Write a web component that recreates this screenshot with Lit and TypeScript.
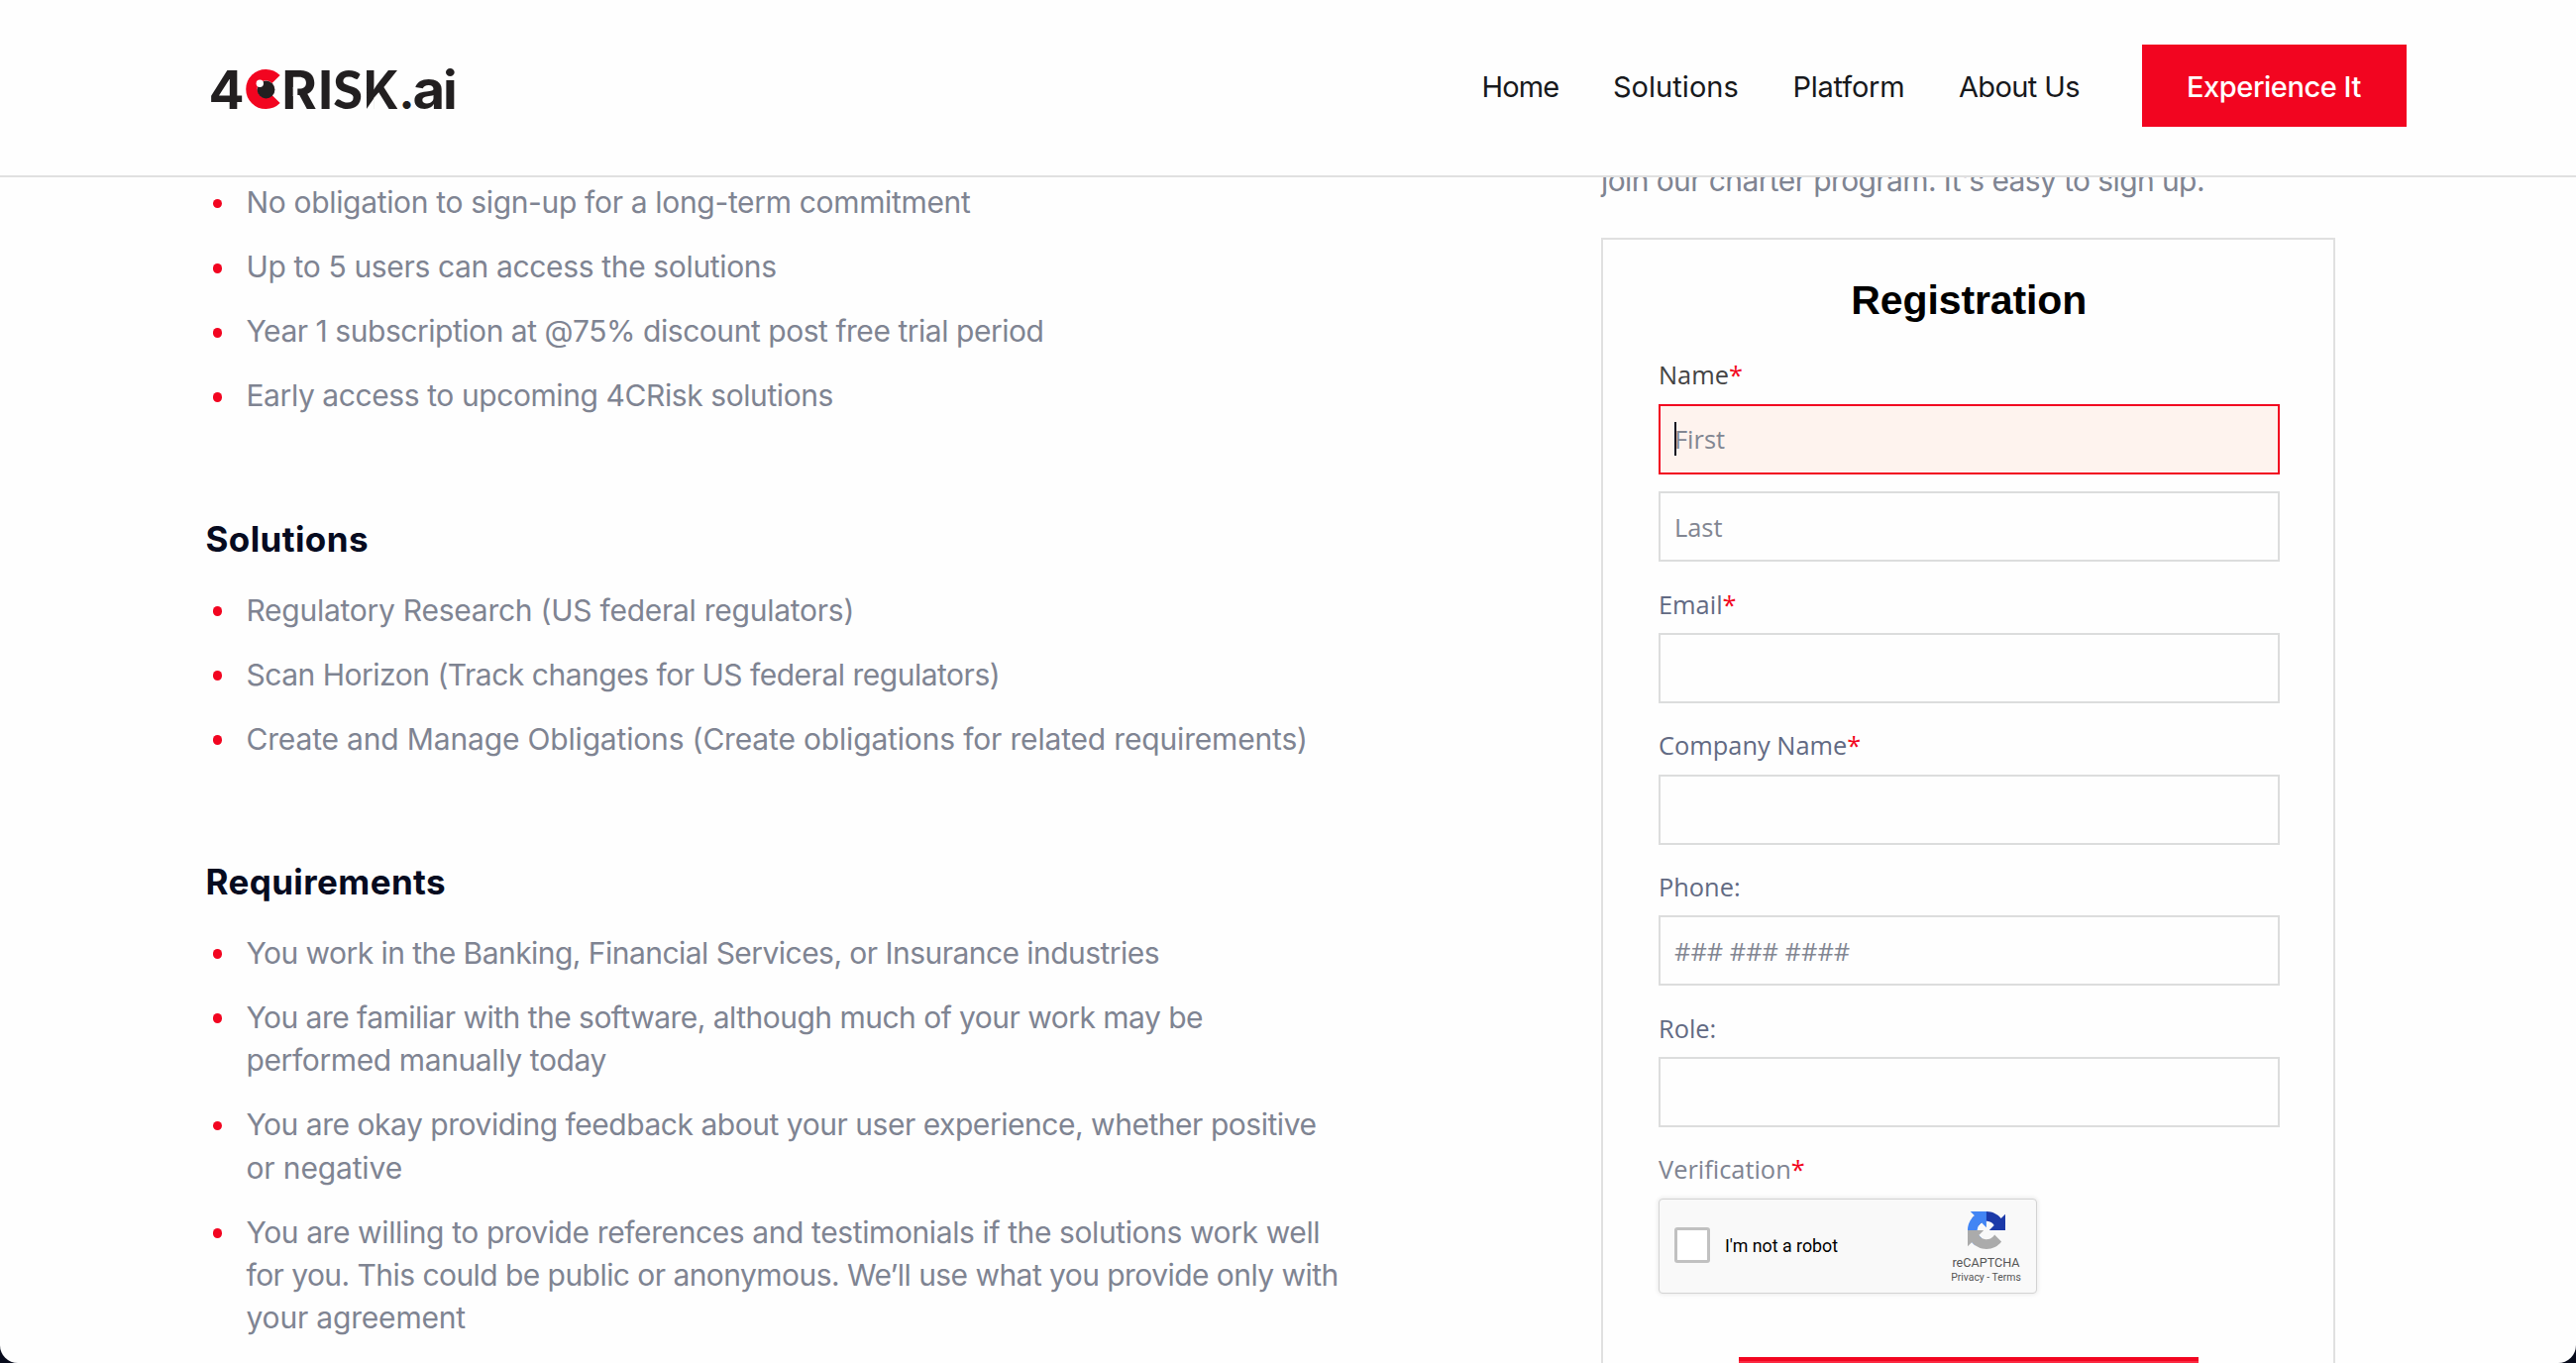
import { LitElement, html, css, svg, nothing } from "lit";
import { customElement, property } from "lit/decorators.js";
import { classMap } from "lit/directives/class-map.js";
import { styleMap } from "lit/directives/style-map.js";

/** A line of text with its tracking in px. */
type Line = [string, number];

const tracked = ([text, tracking]: Line, cls = "line") =>
  html`<span class=${cls} style=${styleMap({ letterSpacing: `${tracking}px` })}>${text}</span>`;

const BENEFITS: Line[][] = [
  [["No obligation to sign-up for a long-term commitment", -0.331]],
  [["Up to 5 users can access the solutions", -0.35]],
  [["Year 1 subscription at @75% discount post free trial period", -0.461]],
  [["Early access to upcoming 4CRisk solutions", -0.413]],
];

const SOLUTIONS: Line[][] = [
  [["Regulatory Research (US federal regulators)", -0.255]],
  [["Scan Horizon (Track changes for US federal regulators)", -0.49]],
  [["Create and Manage Obligations (Create obligations for related requirements)", -0.168]],
];

const REQUIREMENTS: Line[][] = [
  [["You work in the Banking, Financial Services, or Insurance industries", -0.543]],
  [
    ["You are familiar with the software, although much of your work may be", -0.524],
    ["performed manually today", -0.384],
  ],
  [
    ["You are okay providing feedback about your user experience, whether positive", -0.468],
    ["or negative", -0.138],
  ],
  [
    ["You are willing to provide references and testimonials if the solutions work well", -0.395],
    ["for you. This could be public or anonymous. We’ll use what you provide only with", -0.555],
    ["your agreement", -0.184],
  ],
];

const NAV: Line[] = [
  ["Home", -0.81],
  ["Solutions", 0.05],
  ["Platform", -0.2],
  ["About Us", -0.6],
];

@customElement("brand-logo")
class BrandLogo extends LitElement {
  static styles = css`
    :host { display: block; width: 250px; height: 50px; }
    .mark { display: block; overflow: visible; }
    .letter { font-family: Inter, "Liberation Sans", sans-serif; font-weight: 700; font-size: 54.2px; fill: #221f20; }
    .round { font-family: Lato, "Liberation Sans", sans-serif; font-weight: 900; font-size: 54px; }
    .ring { fill: none; stroke: #f20520; stroke-width: 11.4; }
    .pupil { fill: #221f20; }
    .glint { fill: #fff; }
    .notch { fill: #fefefe; }
  `;

  private letter(ch: string, x: number, sx = 1, sy = 1, round = false) {
    return svg`<text class=${classMap({ letter: true, round })}
      transform="translate(${x} 47.9) scale(${sx} ${sy})">${ch}</text>`;
  }

  render() {
    return html`<svg class="mark" width="250" height="50" viewBox="0 0 250 50">
      ${this.letter("4", -0.6, 0.984)}
      <path class="ring" d="M67.6 17.9 A14.4 14.4 0 1 0 67.6 38.1" />
      <circle class="pupil" cx="57.5" cy="28.5" r="8.9" />
      <circle class="glint" cx="51.3" cy="22.3" r="3.7" />
      ${this.letter("R", 73.2)}
      <rect class="notch" x="84.7" y="26" width="4.6" height="9" />
      ${this.letter("I", 110.1)}
      ${this.letter("S", 125.2, 1, 1, true)}
      ${this.letter("K", 155.8, 0.92)}
      <polygon class="notch" points="158.6,48.4 166.9,36.5 166.9,48.4" />
      ${this.letter(".", 191.6, 0.885, 0.885)}
      ${this.letter("a", 205.4, 1.04)}
      ${this.letter("i", 236, 1, 0.97)}
    </svg>`;
  }
}

@customElement("site-header")
class SiteHeader extends LitElement {
  static styles = css`
    :host {
      display: flex; align-items: center; box-sizing: border-box; position: relative; z-index: 1;
      height: 179px; padding: 0 171.5px 4px 211px; border-bottom: 2px solid #e0e0e0;
      background: #fefefe; font-family: Inter, "Liberation Sans", sans-serif; font-size: 29px; color: #17191c;
    }
    .nav { display: flex; align-items: center; margin-left: auto; gap: 54.5px; }
    .link { white-space: nowrap; padding-top: 1px; }
    .cta {
      display: flex; align-items: center; justify-content: center; width: 267px; height: 83px;
      margin-left: 8px; background: #f20520; color: #fff; font-weight: 500;
    }
  `;

  render() {
    return html`
      <brand-logo></brand-logo>
      <nav class="nav">
        ${NAV.map((item) => tracked(item, "link"))}
        <div class="cta">${tracked(["Experience It", -0.45], "link")}</div>
      </nav>
    `;
  }
}

@customElement("bullet-list")
class BulletList extends LitElement {
  @property({ attribute: false }) items: Line[][] = [];

  static styles = css`
    :host { display: flex; flex-direction: column; gap: 21.65px; color: #7f8492; font-size: 30px; line-height: 43.4px; }
    .item { display: flex; gap: 24.4px; padding-left: 7px; }
    .dot { flex: none; width: 9.6px; height: 9.6px; margin-top: 17.6px; border-radius: 50%; background: #f20520; }
    .line { display: block; white-space: nowrap; }
  `;

  render() {
    return this.items.map(
      (lines) => html`<div class="item"><i class="dot"></i><div>${lines.map((l) => tracked(l))}</div></div>`
    );
  }
}

@customElement("form-field")
class FormField extends LitElement {
  @property() label = "";
  @property() tone = "slate";
  @property({ type: Boolean }) required = false;
  @property({ type: Boolean }) active = false;
  @property({ attribute: false }) inputs: string[] = [""];

  static styles = css`
    :host { display: block; font: 25.4px/35px "Open Sans", "Noto Sans", sans-serif; }
    .label { display: block; padding-top: 1px; margin-bottom: 11.6px; color: #626a83; }
    .dark { color: #444; }
    .soft { color: #7f8492; }
    .star { color: #f20520; }
    .stack { display: flex; flex-direction: column; gap: 17.8px; }
    .wrap { position: relative; height: 70.7px; }
    .box {
      box-sizing: border-box; display: block; width: 100%; height: 100%; margin: 0; padding: 0 14px;
      border: 2px solid #dcdddd; border-radius: 0; background: #fefefe; font: inherit; outline: none;
    }
    .box::placeholder { color: #828692; opacity: 1; }
    .focused { border-color: #f20520; background: #fef3ee; }
    .caret { position: absolute; left: 16px; top: 18px; width: 2px; height: 34px; background: #0b1020; }
  `;

  render() {
    const labelClass = { label: true, dark: this.tone === "dark", soft: this.tone === "soft" };
    return html`
      <label class=${classMap(labelClass)}>${this.label}${this.required ? html`<span class="star">*</span>` : nothing}</label>
      <div class="stack">
        ${this.inputs.map((hint, i) => {
          const focused = this.active && i === 0;
          return html`<div class="wrap">
            <input class=${classMap({ box: true, focused })} placeholder=${hint} />
            ${focused ? html`<i class="caret"></i>` : nothing}
          </div>`;
        })}
      </div>
    `;
  }
}

@customElement("robot-check")
class RobotCheck extends LitElement {
  static styles = css`
    :host {
      display: flex; align-items: center; box-sizing: border-box; width: 381.5px; height: 95.7px;
      padding: 0 13px 0 15px; border: 1.5px solid #d3d3d3; border-radius: 4px; background: #f9f9f9;
      box-shadow: 0 0 4px 1px rgba(0, 0, 0, 0.08); font-family: Roboto, sans-serif;
    }
    .check { box-sizing: border-box; width: 36px; height: 36px; margin-bottom: 2px; border: 3px solid #c1c1c1; border-radius: 3px; background: #fff; }
    .text { margin: 0 0 1px 15px; font-size: 17.8px; color: #000; }
    .badge { display: flex; flex-direction: column; align-items: center; width: 74px; margin-left: auto; color: #555; white-space: nowrap; }
    .mark { display: block; width: 38px; height: 38px; margin-top: 3px; }
    .name { margin-top: 5px; font-size: 12.6px; line-height: 17px; }
    .legal { font-size: 10.4px; line-height: 13px; }
    .navy { fill: #1c3aa9; }
    .blue { fill: #4285f4; }
    .grey { fill: #ababab; }
  `;

  render() {
    return html`
      <span class="check"></span>
      <span class="text">I'm not a robot</span>
      <div class="badge">
        <svg class="mark" viewBox="0 0 64 64">
          <path class="navy" d="M64 31.955l-.033-1.37V4.687l-7.16 7.16C50.948 4.674 42.033.093 32.05.093c-10.4 0-19.622 4.96-25.458 12.64l11.736 11.86a15.55 15.55 0 0 1 4.754-5.334c2.05-1.6 4.952-2.906 8.968-2.906.485 0 .86.057 1.135.163 4.976.393 9.288 3.14 11.828 7.124l-8.307 8.307L64 31.953" />
          <path class="blue" d="M31.862.094l-1.37.033H4.594l7.16 7.16C4.58 13.147 0 22.06 0 32.046c0 10.4 4.96 19.622 12.64 25.458L24.5 45.768a15.55 15.55 0 0 1-5.334-4.754c-1.6-2.05-2.906-4.952-2.906-8.968 0-.485.057-.86.163-1.135.393-4.976 3.14-9.288 7.124-11.828l8.307 8.307L31.86.095" />
          <path class="grey" d="M.001 32.045l.033 1.37v25.898l7.16-7.16c5.86 7.173 14.774 11.754 24.76 11.754 10.4 0 19.622-4.96 25.458-12.64l-11.736-11.86a15.55 15.55 0 0 1-4.754 5.334c-2.05 1.6-4.952 2.906-8.968 2.906-.485 0-.86-.057-1.135-.163-4.976-.393-9.288-3.14-11.828-7.124l8.307-8.307c-10.522.04-22.4.066-27.295-.005" />
        </svg>
        <span class="name">reCAPTCHA</span>
        <span class="legal">Privacy - Terms</span>
      </div>
    `;
  }
}

@customElement("registration-card")
class RegistrationCard extends LitElement {
  static styles = css`
    :host {
      display: block; box-sizing: border-box; width: 740.5px; padding: 37px 54px 37px 56px; border: 2px solid #e0e0e0;
      background: #fefefe;
    }
    .title {
      margin: 0 0 33.4px; font: 700 41px/48px "Liberation Sans", Arial, sans-serif; letter-spacing: -0.1px;
      text-align: center; color: #000;
    }
    .fields { display: flex; flex-direction: column; gap: 24.4px; }
    .submit { width: 464px; height: 80px; margin: 64.5px auto 0; box-sizing: border-box; border-top: 4px solid #f20520; background: #fb2a42; }
  `;

  render() {
    return html`
      <h2 class="title">Registration</h2>
      <div class="fields">
        <form-field label="Name" tone="dark" required active .inputs=${["First", "Last"]}></form-field>
        <form-field label="Email" required></form-field>
        <form-field label="Company Name" required></form-field>
        <form-field label="Phone:" .inputs=${["### ### ####"]}></form-field>
        <form-field label="Role:"></form-field>
        <form-field label="Verification" tone="soft" required .inputs=${[]}></form-field>
      </div>
      <robot-check></robot-check>
      <div class="submit"></div>
    `;
  }
}

@customElement("app-root")
class AppRoot extends LitElement {
  static styles = css`
    :host { display: block; height: 1376px; overflow: hidden; background: #070b1c; }
    .page {
      height: 1376px; overflow: hidden; border-radius: 0 0 18px 18px; background: #fefefe;
      font-family: Inter, "Liberation Sans", sans-serif;
    }
    .main { display: grid; grid-template-columns: 1408.5px 741px; padding-left: 207.5px; }
    .copy { padding-top: 4.3px; }
    .heading { margin: 100.9px 0 28.8px; font-size: 35px; line-height: 43px; font-weight: 700; color: #060b1f; letter-spacing: 0.4px; }
    .side { margin-top: -17.8px; }
    .intro { margin: 0 0 35.4px; font-size: 30px; line-height: 43.4px; color: #7f8492; white-space: nowrap; }
  `;

  render() {
    return html`
      <div class="page">
        <site-header></site-header>
        <main class="main">
          <section class="copy">
            <bullet-list .items=${BENEFITS}></bullet-list>
            <h3 class="heading">Solutions</h3>
            <bullet-list .items=${SOLUTIONS}></bullet-list>
            <h3 class="heading">Requirements</h3>
            <bullet-list .items=${REQUIREMENTS}></bullet-list>
          </section>
          <aside class="side">
            <p class="intro">${tracked(["join our charter program. It's easy to sign up.", -0.6])}</p>
            <registration-card></registration-card>
          </aside>
        </main>
      </div>
    `;
  }
}
